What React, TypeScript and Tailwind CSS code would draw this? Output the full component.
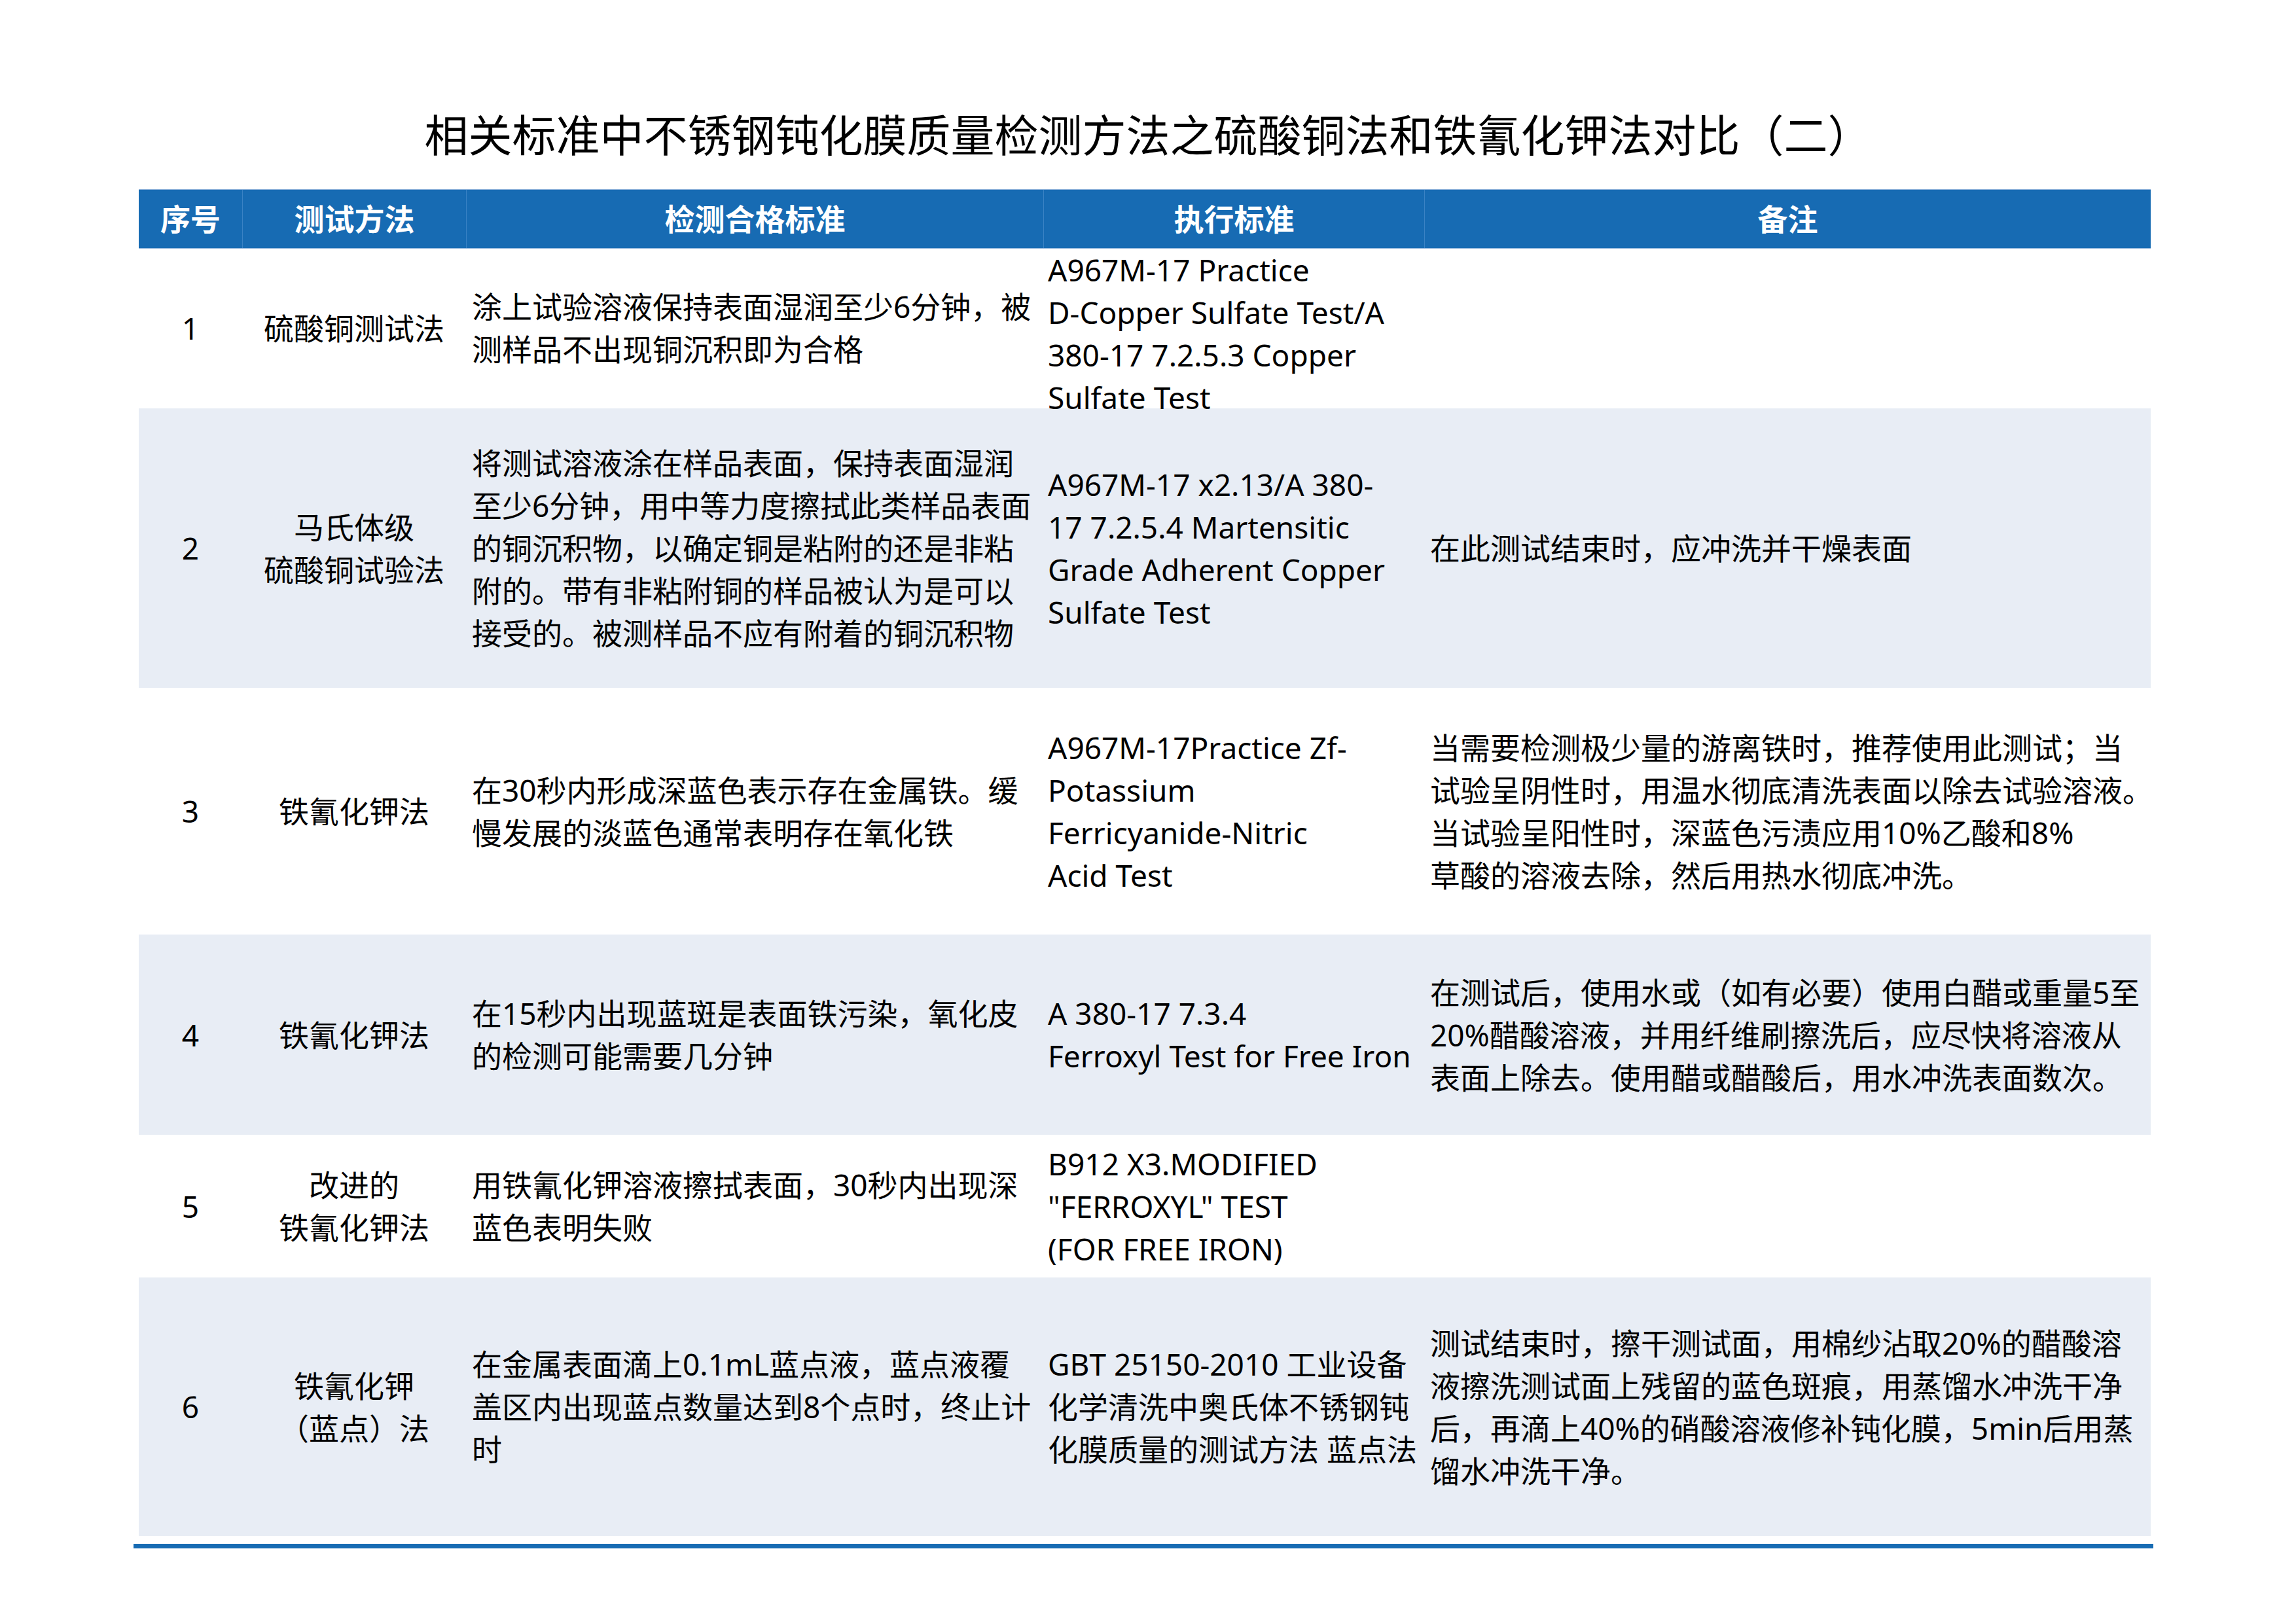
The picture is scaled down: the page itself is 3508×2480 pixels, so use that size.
import React from "react";

type Row = {
  no: string;
  method: string[];
  criteria: string[];
  standard: string[];
  note: string[];
  height: string;
  shaded: boolean;
  lift?: boolean;
};

const rows: Row[] = [
  {
    no: "1",
    method: ["硫酸铜测试法"],
    criteria: ["涂上试验溶液保持表面湿润至少6分钟，被", "测样品不出现铜沉积即为合格"],
    standard: ["A967M-17 Practice", "D-Copper Sulfate Test/A", "380-17 7.2.5.3 Copper", "Sulfate Test"],
    note: [],
    height: "h-[244px]",
    shaded: false,
    lift: true,
  },
  {
    no: "2",
    method: ["马氏体级", "硫酸铜试验法"],
    criteria: [
      "将测试溶液涂在样品表面，保持表面湿润",
      "至少6分钟，用中等力度擦拭此类样品表面",
      "的铜沉积物，以确定铜是粘附的还是非粘",
      "附的。带有非粘附铜的样品被认为是可以",
      "接受的。被测样品不应有附着的铜沉积物",
    ],
    standard: ["A967M-17 x2.13/A 380-", "17 7.2.5.4 Martensitic", "Grade Adherent Copper", "Sulfate Test"],
    note: ["在此测试结束时，应冲洗并干燥表面"],
    height: "h-[427px]",
    shaded: true,
  },
  {
    no: "3",
    method: ["铁氰化钾法"],
    criteria: ["在30秒内形成深蓝色表示存在金属铁。缓", "慢发展的淡蓝色通常表明存在氧化铁"],
    standard: ["A967M-17Practice Zf-", "Potassium", "Ferricyanide-Nitric", "Acid Test"],
    note: [
      "当需要检测极少量的游离铁时，推荐使用此测试；当",
      "试验呈阴性时，用温水彻底清洗表面以除去试验溶液。",
      "当试验呈阳性时，深蓝色污渍应用10%乙酸和8%",
      "草酸的溶液去除，然后用热水彻底冲洗。",
    ],
    height: "h-[377px]",
    shaded: false,
  },
  {
    no: "4",
    method: ["铁氰化钾法"],
    criteria: ["在15秒内出现蓝斑是表面铁污染，氧化皮", "的检测可能需要几分钟"],
    standard: ["A 380-17 7.3.4", "Ferroxyl Test for Free Iron"],
    note: [
      "在测试后，使用水或（如有必要）使用白醋或重量5至",
      "20%醋酸溶液，并用纤维刷擦洗后，应尽快将溶液从",
      "表面上除去。使用醋或醋酸后，用水冲洗表面数次。",
    ],
    height: "h-[306px]",
    shaded: true,
  },
  {
    no: "5",
    method: ["改进的", "铁氰化钾法"],
    criteria: ["用铁氰化钾溶液擦拭表面，30秒内出现深", "蓝色表明失败"],
    standard: ["B912 X3.MODIFIED", "\"FERROXYL\" TEST", "(FOR FREE IRON)"],
    note: [],
    height: "h-[218px]",
    shaded: false,
  },
  {
    no: "6",
    method: ["铁氰化钾", "（蓝点）法"],
    criteria: ["在金属表面滴上0.1mL蓝点液，蓝点液覆", "盖区内出现蓝点数量达到8个点时，终止计", "时"],
    standard: ["GBT 25150-2010 工业设备", "化学清洗中奥氏体不锈钢钝", "化膜质量的测试方法 蓝点法"],
    note: [
      "测试结束时，擦干测试面，用棉纱沾取20%的醋酸溶",
      "液擦洗测试面上残留的蓝色斑痕，用蒸馏水冲洗干净",
      "后，再滴上40%的硝酸溶液修补钝化膜，5min后用蒸",
      "馏水冲洗干净。",
    ],
    height: "h-[395px]",
    shaded: true,
  },
];

const headers = ["序号", "测试方法", "检测合格标准", "执行标准", "备注"];

function Lines({ lines }: { lines: string[] }) {
  return (
    <div>
      {lines.map((l, i) => (
        <div key={i} className="whitespace-nowrap">
          {l}
        </div>
      ))}
    </div>
  );
}

export default function App() {
  return (
    <div
      className="w-[3508px] h-[2480px] bg-white text-black overflow-hidden"
      style={{ fontFamily: "'Noto Sans', 'Noto Sans CJK SC', sans-serif" }}
    >
      <h1 className="mt-[166px] h-[80px] text-center text-[67px] leading-[80px] font-normal">
        相关标准中不锈钢钝化膜质量检测方法之硫酸铜法和铁氰化钾法对比（二）
      </h1>

      <div className="mt-[43px] ml-[212px] w-[3074px]">
        <div className="grid h-[91px] grid-cols-[158px_342px_882px_582px_1110px] border-y border-[#8fb3da] bg-[#176bb3] text-[46px] font-bold text-white">
          {headers.map((h, i) => (
            <div
              key={h}
              className={`flex items-center justify-center ${i > 0 ? "border-l border-[#3a82c4]" : ""}`}
            >
              {h}
            </div>
          ))}
        </div>

        {rows.map((r) => (
          <div
            key={r.no}
            className={`grid grid-cols-[158px_342px_882px_582px_1110px] text-[46px] leading-[65px] ${r.height} ${
              r.shaded ? "bg-[#e8edf5]" : "bg-white"
            }`}
          >
            <div className={`flex items-center justify-center ${r.lift ? "pb-[18px]" : ""}`}>{r.no}</div>
            <div className={`flex items-center justify-center text-center ${r.lift ? "pb-[18px]" : ""}`}>
              <Lines lines={r.method} />
            </div>
            <div className={`flex items-center pl-[9px] ${r.lift ? "pb-[18px]" : ""}`}>
              <Lines lines={r.criteria} />
            </div>
            <div className="flex items-center pl-[7px]">
              <Lines lines={r.standard} />
            </div>
            <div className="flex items-center pl-[9px]">
              <Lines lines={r.note} />
            </div>
          </div>
        ))}
      </div>

      <div className="mt-[12px] ml-[204px] h-[7px] w-[3086px] bg-[#176bb3]" />
    </div>
  );
}
